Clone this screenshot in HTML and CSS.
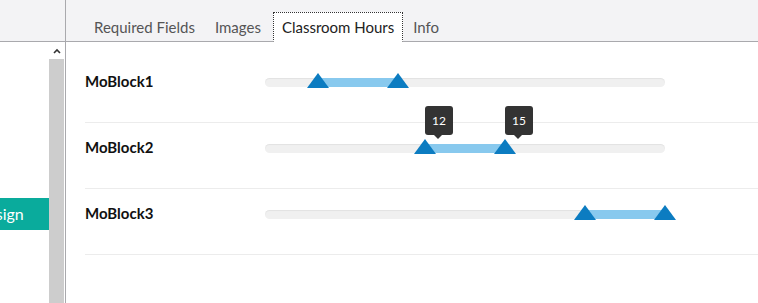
FILE: index.html
```html
<!DOCTYPE html>
<html lang="en">
<head>
  <meta charset="UTF-8">
  <title>Classroom Hours</title>
  <link rel="stylesheet" href="styles.css">
</head>
<body>
  <div class="page">
    <div class="sidebar">
      <div class="bar"></div>
      <div class="side-body">
        <div class="side-content">
          <a href="#" class="btn-assign">Assign</a>
        </div>
        <div class="scrollbar">
          <div class="scroll-up">
            <svg width="8" height="6" viewBox="0 0 8 6"><path d="M1 5 L4 2 L7 5" fill="none" stroke="#333" stroke-width="1.6"/></svg>
          </div>
          <div class="scroll-thumb"></div>
        </div>
      </div>
    </div>

    <div class="main">
      <div class="bar tabs">
        <span class="tab">Required Fields</span>
        <span class="tab">Images</span>
        <span class="tab active">Classroom Hours</span>
        <span class="tab">Info</span>
      </div>

      <div class="rows">
        <div class="row">
          <div class="label">MoBlock1</div>
          <div class="slider">
            <div class="fill" style="left: 13.333%; width: 20%;"></div>
            <div class="handle" style="left: 13.333%;"></div>
            <div class="handle" style="left: 33.333%;"></div>
          </div>
        </div>
        <div class="row">
          <div class="label">MoBlock2</div>
          <div class="slider">
            <div class="fill" style="left: 40%; width: 20%;"></div>
            <div class="handle" style="left: 40%;"><span class="tip">12</span></div>
            <div class="handle" style="left: 60%;"><span class="tip">15</span></div>
          </div>
        </div>
        <div class="row">
          <div class="label">MoBlock3</div>
          <div class="slider">
            <div class="fill" style="left: 80%; width: 20%;"></div>
            <div class="handle" style="left: 80%;"></div>
            <div class="handle" style="left: 100%;"></div>
          </div>
        </div>
      </div>
    </div>
  </div>
</body>
</html>
```

FILE: styles.css
```css
* {
  box-sizing: border-box;
}
html, body {
  margin: 0;
  height: 100%;
}
body {
  font-family: Lato, 'Liberation Sans', sans-serif;
  background: #fff;
  color: #222;
  overflow: hidden;
}
.page {
  display: flex;
  height: 100%;
}
.bar {
  height: 42px;
  background: #f3f3f5;
  border-bottom: 1px solid #a9a9ad;
}
.sidebar {
  width: 66px;
  flex-shrink: 0;
  border-right: 1px solid #a9a9ad;
  display: flex;
  flex-direction: column;
}
.side-body {
  flex: 1;
  display: flex;
}
.side-content {
  width: 49px;
  overflow: hidden;
}
.btn-assign {
  display: block;
  width: 88px;
  height: 32px;
  margin: 156px 0 0 -39px;
  padding: 0 0 0 17px;
  line-height: 32px;
  background: #0aab9c;
  color: #fff;
  font-size: 16px;
  text-decoration: none;
}
.scrollbar {
  width: 15px;
  display: flex;
  flex-direction: column;
}
.scroll-up {
  height: 17px;
  background: #fff;
  display: flex;
  align-items: center;
  justify-content: center;
}
.scroll-thumb {
  flex: 1;
  background: #cdcdcd;
}
.main {
  flex: 1;
  min-width: 0;
}
.tabs {
  display: flex;
  align-items: flex-end;
  padding-left: 18px;
}
.tab {
  height: 30px;
  padding: 0 9px;
  line-height: 28px;
  font-size: 15px;
  color: #555;
  border: 1px solid transparent;
  margin-bottom: -1px;
}
.tab.active {
  margin-left: 2px;
  padding: 0 8px;
  background: #fff;
  color: #222;
  border: 1px dotted #333;
  border-bottom-color: #fff;
}
.rows {
  padding: 15px 0 0 19px;
}
.row {
  display: flex;
  align-items: center;
  height: 66px;
  padding-bottom: 15px;
  border-bottom: 1px solid #ececec;
}
.label {
  width: 180px;
  font-size: 15px;
  font-weight: bold;
  color: #111;
  margin-top: -2px;
}
.slider {
  position: relative;
  width: 400px;
  height: 9px;
  background: #f0f0f0;
  border-radius: 5px;
  box-shadow: inset 0 1px 1px rgba(0,0,0,0.06);
}
.fill {
  position: absolute;
  top: 0;
  bottom: 0;
  background: #88c9ee;
}
.handle {
  position: absolute;
  bottom: -1px;
  width: 23px;
  height: 15px;
  margin-left: -11.5px;
}
.handle::before {
  content: "";
  position: absolute;
  left: 0;
  bottom: 0;
  border-left: 11.5px solid transparent;
  border-right: 11.5px solid transparent;
  border-bottom: 15px solid #0c7cc1;
}
.tip {
  position: absolute;
  left: 11.5px;
  bottom: 19px;
  width: 28px;
  height: 29px;
  line-height: 29px;
  background: #333;
  border-radius: 3px;
  color: #fff;
  font-size: 12px;
  text-align: center;
}
.tip::after {
  content: "";
  position: absolute;
  left: 9px;
  bottom: -4px;
  border-left: 4px solid transparent;
  border-right: 4px solid transparent;
  border-top: 4px solid #333;
}
```
